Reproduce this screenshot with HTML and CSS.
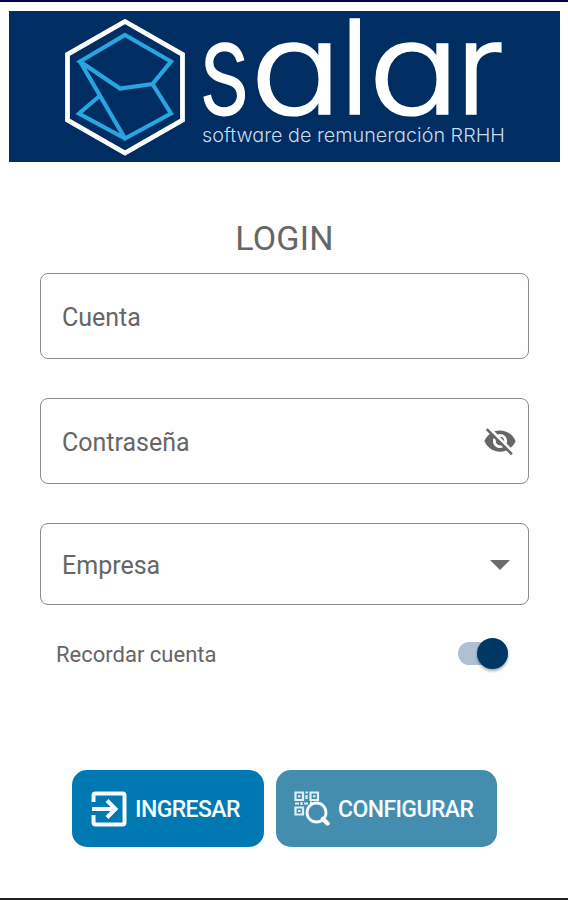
FILE: index.html
```html
<!DOCTYPE html>
<html lang="es">
<head>
<meta charset="utf-8">
<title>Salar - Login</title>
<link rel="stylesheet" href="styles.css">
</head>
<body>
<main class="screen">
  <header class="banner">
    <svg class="logo" viewBox="9 11 551 150" role="img" aria-label="salar">
      <path class="hexagon" d="M125 21.500 182.500 54.500V120L125 153 67.500 120V54.500Z"/>
      <path class="mark" d="M125 35 171 61.500 152.500 84 120 88.500 80 61.500ZM80 61.500 125 138.500 171 113.500 152.500 84M99.500 96 79 113.500 125 138.500"/>
      <g class="wordmark">
        <text transform="translate(198.500 113.500) scale(.76 .98)">s</text>
        <text transform="translate(250 113.500) scale(1.17 .98)">a</text>
        <text transform="translate(339.500 113.500)">l</text>
        <text transform="translate(368 113.500) scale(1.17 .98)">a</text>
        <text transform="translate(455.500 113.500) scale(1.030 .98)">r</text>
      </g>
      <text class="tagline" x="202" y="142" textLength="303" lengthAdjust="spacingAndGlyphs">software de remuneración RRHH</text>
    </svg>
  </header>
  <form class="login">
    <h1 class="title">LOGIN</h1>
    <div class="field"><span>Cuenta</span></div>
    <div class="field"><span>Contraseña</span>
      <svg class="eye" viewBox="0 0 24 24"><path d="M12 7c2.760 0 5 2.240 5 5 0 .650-.130 1.260-.360 1.830l2.920 2.920c1.510-1.260 2.700-2.890 3.430-4.750-1.730-4.390-6-7.500-11-7.500-1.400 0-2.740.250-3.980.700l2.160 2.160C10.740 7.130 11.350 7 12 7zM2 4.270l2.280 2.280.460.460C3.080 8.300 1.780 10.020 1 12c1.730 4.390 6 7.500 11 7.500 1.550 0 3.030-.300 4.380-.840l.420.420L19.730 22 21 20.730 3.270 3 2 4.270zM7.530 9.800l1.550 1.550c-.050.210-.080.430-.080.650 0 1.660 1.340 3 3 3 .220 0 .440-.030.650-.080l1.550 1.550c-.670.330-1.410.530-2.200.530-2.760 0-5-2.240-5-5 0-.790.200-1.530.530-2.200zm4.310-.780l3.150 3.150.020-.160c0-1.660-1.340-3-3-3l-.170.010z"/></svg>
    </div>
    <div class="field select"><span>Empresa</span>
      <svg class="arrow" viewBox="0 0 20 10"><path d="M0 0H20L10 10Z"/></svg>
    </div>
    <div class="remember"><span class="caption">Recordar cuenta</span><span class="switch"><span class="thumb"></span></span></div>
    <div class="actions">
      <button type="button" class="button enter">
        <svg class="icon" viewBox="0 0 36 36"><path class="line" d="M2.500 11V4.500Q2.500 2.500 4.500 2.500H31.500Q33.500 2.500 33.500 4.500V31.500Q33.500 33.500 31.500 33.500H4.500Q2.500 33.500 2.500 31.500V24M1 18H25M16 9.500 24.500 18 16 26.500"/></svg>
        <span class="caption">INGRESAR</span>
      </button>
      <button type="button" class="button configure">
        <svg class="icon" viewBox="0 0 36 36">
          <path class="qr" d="M1.500 1.500H9V9H1.500ZM16.500 1.500H24V9H16.500ZM1.500 16.500H9V23.500H1.500ZM4 5.250H6.500M19 5.250H21.500M4 20H6.500M11.500 1.500H14M12.500 4V8M1 12.500H5M7.500 11V14M10 12.500H14M16 11.500H18"/>
          <circle class="lens" cx="22.500" cy="21.500" r="9.500"/>
          <path class="handle" d="M29 28 33.500 32.500"/>
        </svg>
        <span class="caption">CONFIGURAR</span>
      </button>
    </div>
  </form>
</main>
</body>
</html>
```
FILE: styles.css
```css
* { box-sizing: border-box; }
body { margin: 0; background: #fefefe; font-family: Roboto, sans-serif; color: #666; }
.screen { height: 900px; border-top: 2px solid #02004f; border-bottom: 2px solid #222; padding: 9px 8px 0 9px; overflow: hidden; }
.banner { height: 151px; background: #002d62; border: 1px solid #16236a; }
.logo { display: block; width: 551px; height: 150px; margin: -1px; overflow: visible; }
.hexagon { fill: none; stroke: #fff; stroke-width: 4.800; }
.mark { fill: none; stroke: #29a5df; stroke-width: 4.200; }
.wordmark { font: 300 131px Inter, sans-serif; font-feature-settings: "cv11"; fill: #fff; stroke: #fff; stroke-width: 1.700px; }
.tagline { font: 300 19px Inter, sans-serif; font-feature-settings: "cv11"; fill: #c9d9ea; }
.login { display: flex; flex-direction: column; padding: 56px 31px 0; }
.title { margin: 0 0 15px; font-size: 34px; font-weight: 400; line-height: 40px; letter-spacing: .2px; text-align: center; }
.field { display: flex; align-items: center; justify-content: space-between; height: 86px; margin-bottom: 39px; padding: 2px 11px 0 21px; border: 1.500px solid #8c8c8c; border-radius: 8px; font-size: 25px; }
.select { height: 82px; padding-right: 18px; margin-bottom: 28px; }
.eye { width: 34px; height: 34px; margin-top: -2px; fill: #666; }
.arrow { width: 20px; height: 10px; fill: #6b6b6b; }
.remember { display: flex; align-items: center; justify-content: space-between; height: 40px; padding: 0 21px 0 16px; font-size: 22px; }
.caption { padding-top: 2px; }
.switch { display: flex; align-items: center; justify-content: flex-end; width: 50px; height: 23px; border-radius: 12px; background: #adc1d3; }
.thumb { flex: none; width: 31px; height: 31px; border-radius: 50%; background: #003764; box-shadow: 0 2px 3px #0005; }
.actions { display: flex; gap: 12px; padding-left: 32px; margin-top: 97px; }
.button { display: flex; align-items: center; gap: 8px; height: 77px; padding: 0 0 0 19px; border: 0; border-radius: 15px; color: #f5fbff; font: 500 23px Roboto, sans-serif; letter-spacing: -.6px; }
.enter { width: 192px; background: #0078b1; }
.configure { width: 221px; padding-left: 18px; background: #438eaf; }
.icon { flex: none; width: 36px; height: 36px; fill: none; stroke: #f8fcff; }
.line { stroke-width: 4; }
.qr { stroke-width: 2.200; opacity: .88; }
.lens { stroke-width: 2.800; fill: #438eaf; }
.handle { stroke-width: 4.500; stroke-linecap: round; }
```
